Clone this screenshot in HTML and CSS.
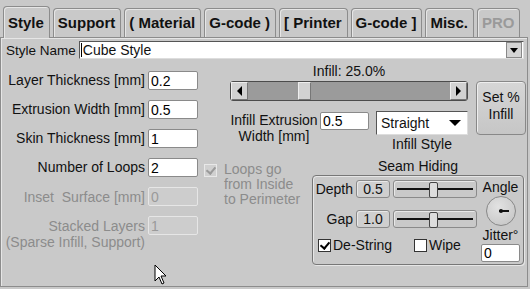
FILE: index.html
```html
<!DOCTYPE html>
<html lang="en">
<head>
    <meta charset="UTF-8">
    <title>Style</title>
    <link rel="stylesheet" href="styles.css">
</head>
<body>
    <div class="tabs">
        <div class="tab active">Style</div>
        <div class="tab">Support</div>
        <div class="tab">( Material</div>
        <div class="tab">G-code )</div>
        <div class="tab">[ Printer</div>
        <div class="tab">G-code ]</div>
        <div class="tab">Misc.</div>
        <div class="tab disabled">PRO</div>
    </div>
    <div class="panel">
        <div class="name-row">
            <span class="name-label">Style Name</span>
            <div class="combo">
                <span class="caret"></span>
                <span class="combo-text">Cube Style</span>
                <span class="combo-btn"><span class="arrow"></span></span>
            </div>
        </div>
        <div class="main">
            <div class="fields">
                <div class="field"><label>Layer Thickness [mm]</label><input class="box" value="0.2"></div>
                <div class="field"><label>Extrusion Width [mm]</label><input class="box" value="0.5"></div>
                <div class="field"><label>Skin Thickness [mm]</label><input class="box" value="1"></div>
                <div class="field"><label>Number of Loops</label><input class="box" value="2"></div>
                <div class="field off"><label>Inset&nbsp; Surface [mm]</label><input class="box" value="0" disabled></div>
                <div class="field off"><label>Stacked Layers<br>(Sparse Infill, Support)</label><input class="box" value="1" disabled></div>
            </div>
            <div class="side">
                <div class="infill">
                    <div class="infill-label">Infill: 25.0%</div>
                    <div class="scrollbar">
                        <span class="sb-btn"><span class="tri-left"></span></span>
                        <span class="sb-track"><span class="sb-thumb"></span></span>
                        <span class="sb-btn"><span class="tri-right"></span></span>
                    </div>
                    <div class="set-btn">Set %<br>Infill</div>
                    <div class="infill-row">
                        <div class="ie-label">Infill Extrusion<br>Width [mm]</div>
                        <input class="box ie-input" value="0.5">
                        <div class="style-col">
                            <div class="select">
                                <span>Straight</span>
                                <span class="arrow big"></span>
                            </div>
                            <div class="style-label">Infill Style</div>
                        </div>
                    </div>
                </div>
                <div class="lower">
                    <div class="loops-note">
                        <span class="check dis"></span>
                        <span class="note">Loops go<br>from Inside<br>to Perimeter</span>
                    </div>
                    <div class="seam">
                        <div class="seam-title">Seam Hiding</div>
                        <div class="seam-box">
                            <div class="seam-left">
                                <div class="seam-row">
                                    <span class="seam-lbl">Depth</span>
                                    <span class="val">0.5</span>
                                    <span class="slider"><span class="knob-thumb"></span></span>
                                </div>
                                <div class="seam-row">
                                    <span class="seam-lbl">Gap</span>
                                    <span class="val">1.0</span>
                                    <span class="slider"><span class="knob-thumb"></span></span>
                                </div>
                                <div class="checks">
                                    <span class="cb"><span class="check on"></span>De-String</span>
                                    <span class="cb"><span class="check"></span>Wipe</span>
                                </div>
                            </div>
                            <div class="seam-right">
                                <span class="small-lbl">Angle</span>
                                <span class="dial"><span class="dial-mark"></span></span>
                                <span class="small-lbl">Jitter&deg;</span>
                                <input class="box jitter" value="0">
                            </div>
                        </div>
                    </div>
                </div>
            </div>
        </div>
        <svg class="cursor" width="14" height="22" viewBox="0 0 14 22">
            <path d="M1 1 L1 17 L5 13 L8 20 L10 19 L7 12 L12 12 Z" fill="#fff" stroke="#000" stroke-width="1"/>
        </svg>
    </div>
</body>
</html>
```
FILE: styles.css
```css
body {
    margin: 0;
    background: #c9c9c9;
    font-family: "Liberation Sans", Arial, sans-serif;
    font-size: 14px;
    color: #111;
    width: 530px;
    height: 289px;
    overflow: hidden;
}
.tabs {
    display: flex;
    align-items: flex-end;
    gap: 3px;
    height: 37px;
    padding-left: 3px;
}
.tab {
    height: 28px;
    line-height: 28px;
    padding: 0 5px 0 4px;
    font-size: 15px;
    font-weight: bold;
    white-space: nowrap;
    border: 1px solid #8c8c8c;
    border-bottom: none;
    border-radius: 4px 4px 0 0;
    box-shadow: inset 1px 1px 0 #e6e6e6;
}
.tab.active {
    height: 31px;
    line-height: 31px;
    position: relative;
    z-index: 1;
    margin-bottom: -1px;
    background: #c9c9c9;
}
.tab.disabled {
    color: #9a9a9a;
}
.panel {
    position: relative;
    height: 248px;
    margin: 0 2px 0 0;
    border: 1px solid #8c8c8c;
    box-shadow: inset 1px 1px 0 #e6e6e6;
}
.name-row {
    display: flex;
    align-items: center;
    gap: 3px;
    padding: 3px 3px 0 5px;
}
.name-label {
    font-size: 13.5px;
    white-space: nowrap;
}
.combo {
    flex: 1;
    display: flex;
    align-items: center;
    height: 16px;
    background: #fff;
    border: 1px solid #555;
    border-right-color: #ddd;
    border-bottom-color: #ddd;
}
.combo-text {
    flex: 1;
    font-size: 14px;
    line-height: 16px;
}
.caret {
    width: 1px;
    height: 14px;
    margin: 0 1px;
    background: #000;
}
.combo-btn {
    width: 14px;
    height: 14px;
    margin-right: 1px;
    background: #d4d4d4;
    border: 1px solid #888;
    display: flex;
    align-items: center;
    justify-content: center;
}
.arrow {
    width: 0;
    height: 0;
    border-left: 4px solid transparent;
    border-right: 4px solid transparent;
    border-top: 5px solid #000;
}
.arrow.big {
    border-left-width: 6px;
    border-right-width: 6px;
    border-top-width: 6px;
}
.main {
    display: flex;
    padding-top: 12px;
}
.fields {
    width: 200px;
    display: flex;
    flex-direction: column;
    gap: 10px;
}
.field {
    display: grid;
    grid-template-columns: 141px 50px;
    column-gap: 3px;
    align-items: start;
    padding-left: 3px;
}
.field label {
    text-align: right;
    line-height: 19px;
    white-space: nowrap;
}
.field.off label {
    color: #8c8c8c;
    line-height: 16px;
    padding-top: 2px;
}
.box {
    box-sizing: border-box;
    width: 50px;
    height: 19px;
    padding: 0 2px;
    margin: 0;
    font: inherit;
    font-size: 14px;
    color: #000;
    background: #fff;
    border: 1px solid #8a8a8a;
    border-radius: 2px;
    outline: none;
}
.box:disabled {
    color: #9a9a9a;
    background: #cdcdcd;
    border-color: #e6e6e6;
}
.side {
    flex: 1;
}
.infill {
    display: grid;
    grid-template-columns: 238px 50px;
    column-gap: 8px;
    padding-left: 29px;
    margin-top: -8px;
}
.infill-label {
    text-align: center;
    line-height: 17px;
    grid-column: 1;
}
.scrollbar {
    grid-column: 1;
    display: flex;
    height: 18px;
    border: 1px solid #4c4c4c;
    border-radius: 3px;
    background: #9b9b9b;
    margin-top: 1px;
}
.sb-btn {
    width: 15px;
    background: #d2d2d2;
    border: 1px solid #eee;
    border-right-color: #777;
    border-bottom-color: #777;
    display: flex;
    align-items: center;
    justify-content: center;
}
.sb-track {
    flex: 1;
    position: relative;
}
.sb-thumb {
    position: absolute;
    left: 50px;
    top: 0;
    width: 11px;
    height: 16px;
    background: #d2d2d2;
    border: 1px solid #eee;
    border-right-color: #777;
    border-bottom-color: #777;
}
.tri-left, .tri-right {
    width: 0;
    height: 0;
    border-top: 5px solid transparent;
    border-bottom: 5px solid transparent;
}
.tri-left {
    border-right: 5px solid #000;
}
.tri-right {
    border-left: 5px solid #000;
}
.set-btn {
    grid-column: 2;
    grid-row: 2 / 4;
    margin-top: 1px;
    height: 54px;
    box-sizing: border-box;
    padding-top: 7px;
    text-align: center;
    line-height: 17px;
    font-size: 14px;
    border: 1px solid #888;
    border-radius: 4px;
    background: linear-gradient(#d6d6d6, #c6c6c6);
    box-shadow: inset 1px 1px 0 #eee;
}
.infill-row {
    grid-column: 1;
    display: flex;
    align-items: flex-start;
    margin-top: 10px;
}
.ie-label {
    width: 88px;
    flex: none;
    text-align: center;
    line-height: 16px;
    white-space: nowrap;
    margin-top: 1px;
}
.ie-input {
    width: 49px;
    height: 18px;
    margin-top: 1px;
    margin-left: 2px;
}
.style-col {
    margin-left: 7px;
    width: 94px;
    text-align: center;
}
.select {
    box-sizing: border-box;
    height: 24px;
    display: flex;
    align-items: center;
    justify-content: space-between;
    padding: 0 6px 0 4px;
    background: #fff;
    border: 1px solid #555;
    border-right-color: #ddd;
    border-bottom-color: #ddd;
}
.style-label {
    line-height: 17px;
    margin-top: 1px;
}
.lower {
    display: flex;
    margin-top: 3px;
}
.loops-note {
    box-sizing: border-box;
    width: 111px;
    display: flex;
    align-items: flex-start;
    padding: 7px 0 0 3px;
    gap: 7px;
    color: #8c8c8c;
}
.note {
    line-height: 15px;
    margin-top: -1px;
}
.check {
    box-sizing: border-box;
    display: inline-block;
    width: 13px;
    height: 13px;
    background: #fff;
    border: 1px solid #333;
    position: relative;
    flex: none;
}
.check.dis {
    background: #d0d0d0;
    border-color: #e8e8e8;
    margin-top: 1px;
}
.check.on::after,
.check.dis::after {
    content: "";
    position: absolute;
    left: 3px;
    top: 0;
    width: 4px;
    height: 7px;
    border: solid #000;
    border-width: 0 2px 2px 0;
    transform: rotate(40deg);
}
.check.dis::after {
    border-color: #9a9a9a;
}
.seam {
    width: 212px;
}
.seam-title {
    text-align: center;
    line-height: 16px;
    margin-top: 2px;
}
.seam-box {
    box-sizing: border-box;
    height: 90px;
    margin-top: 1px;
    display: flex;
    border: 1px solid #777;
    border-radius: 4px;
    box-shadow: 1px 1px 0 #e6e6e6, inset 1px 1px 0 #e6e6e6;
    padding: 4px 3px 0 2px;
}
.seam-left {
    width: 166px;
    flex: none;
    display: flex;
    flex-direction: column;
    gap: 12px;
}
.seam-row {
    display: flex;
    align-items: center;
    gap: 3px;
}
.seam-lbl {
    width: 38px;
    text-align: right;
}
.val {
    box-sizing: border-box;
    width: 34px;
    height: 18px;
    line-height: 16px;
    text-align: center;
    border: 1px solid #8a8a8a;
    border-radius: 3px;
    background: #cfcfcf;
    box-shadow: inset 1px 1px 0 #e8e8e8;
}
.slider {
    box-sizing: border-box;
    width: 84px;
    height: 18px;
    position: relative;
    border: 1px solid #8a8a8a;
    border-radius: 3px;
    box-shadow: inset 1px 1px 0 #e8e8e8;
}
.slider::before {
    content: "";
    position: absolute;
    left: 3px;
    right: 3px;
    top: 7px;
    height: 2px;
    background: #111;
}
.knob-thumb {
    position: absolute;
    left: 35px;
    top: 1px;
    width: 7px;
    height: 14px;
    background: #ddd;
    border: 1px solid #444;
    border-radius: 2px;
}
.checks {
    display: flex;
    margin-top: -3px;
    padding-left: 3px;
}
.cb {
    display: flex;
    align-items: center;
    gap: 2px;
}
.cb:first-child {
    width: 96px;
    flex: none;
}
.seam-right {
    display: flex;
    flex-direction: column;
    align-items: center;
    padding-left: 0;
}
.small-lbl {
    line-height: 15px;
}
.dial {
    width: 30px;
    height: 30px;
    margin: 1px 0 2px;
    border-radius: 50%;
    border: 1px solid #888;
    box-sizing: border-box;
    background: radial-gradient(circle at 40% 35%, #e2e2e2, #c2c2c2);
    position: relative;
}
.dial-mark {
    position: absolute;
    left: 12px;
    top: 13px;
    width: 10px;
    height: 2px;
    background: #111;
}
.dial-mark::before {
    content: "";
    position: absolute;
    left: 0;
    top: -1px;
    width: 4px;
    height: 4px;
    border-radius: 50%;
    background: #111;
}
.jitter {
    width: 39px;
    height: 18px;
    margin-top: 1px;
}
.cursor {
    position: absolute;
    left: 153px;
    top: 226px;
}
```
